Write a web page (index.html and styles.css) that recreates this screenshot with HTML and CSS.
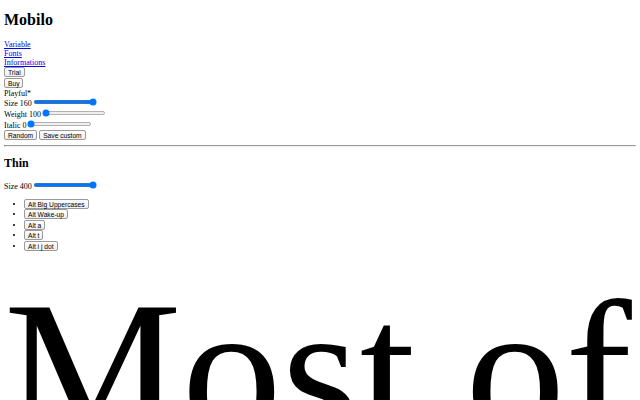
FILE: index.html
```html
<!DOCTYPE html>
<html>
<head>
<meta charset="utf-8">
<title>Mobilo</title>
<link rel="stylesheet" href="styles.css">
</head>
<body>
<h1 class="title">Mobilo</h1>
<nav>
<div><a href="#">Variable</a></div>
<div><a href="#">Fonts</a></div>
<div><a href="#">Informations</a></div>
</nav>
<div class="btn-row"><button>Trial</button></div>
<div class="btn-row"><button>Buy</button></div>
<div class="label-row">Playful*</div>
<div class="slider-row">Size 160 <input type="range" min="0" max="160" value="160"></div>
<div class="slider-row">Weight 100 <input type="range" min="100" max="900" value="100"></div>
<div class="slider-row">Italic 0 <input type="range" min="0" max="10" value="0"></div>
<div class="btn-row"><button>Random</button> <button>Save custom</button></div>
<hr>
<h2 class="subtitle">Thin</h2>
<div class="slider-row">Size 400 <input type="range" min="0" max="400" value="400"></div>
<ul class="alts">
<li><button>Alt Big Uppercases</button></li>
<li><button>Alt Wake-up</button></li>
<li><button>Alt a</button></li>
<li><button>Alt t</button></li>
<li><button>Alt i j dot</button></li>
</ul>
<p class="sample">Most of</p>
</body>
</html>
```
FILE: styles.css
```css
html {
  zoom: 0.5;
}
body {
  font-family: "Liberation Serif", "Times New Roman", serif;
  overflow: hidden;
}
.title {
  margin-top: 14px;
}
.subtitle {
  margin: 18px 0;
}
button {
  font-family: "Liberation Sans", Arial, sans-serif;
  font-size: 13.33px;
  line-height: 18px;
  height: 20px;
  box-sizing: border-box;
  padding: 0 6px;
  border: 1px solid #9a9a9a;
  border-radius: 4px;
  background: linear-gradient(#fdfdfd, #efefef);
  color: #000;
  vertical-align: top;
}
.btn-row {
  height: 22px;
  line-height: 22px;
}
.btn-row button {
  margin-top: 1px;
}
.label-row {
  height: 16px;
}
.slider-row {
  height: 22px;
}
.slider-row input {
  margin-left: -2px;
}
.alts li {
  height: 21px;
  line-height: 21px;
}
.sample {
  font-size: 400px;
  margin: -6px 0 0;
  white-space: nowrap;
  line-height: normal;
}
```
